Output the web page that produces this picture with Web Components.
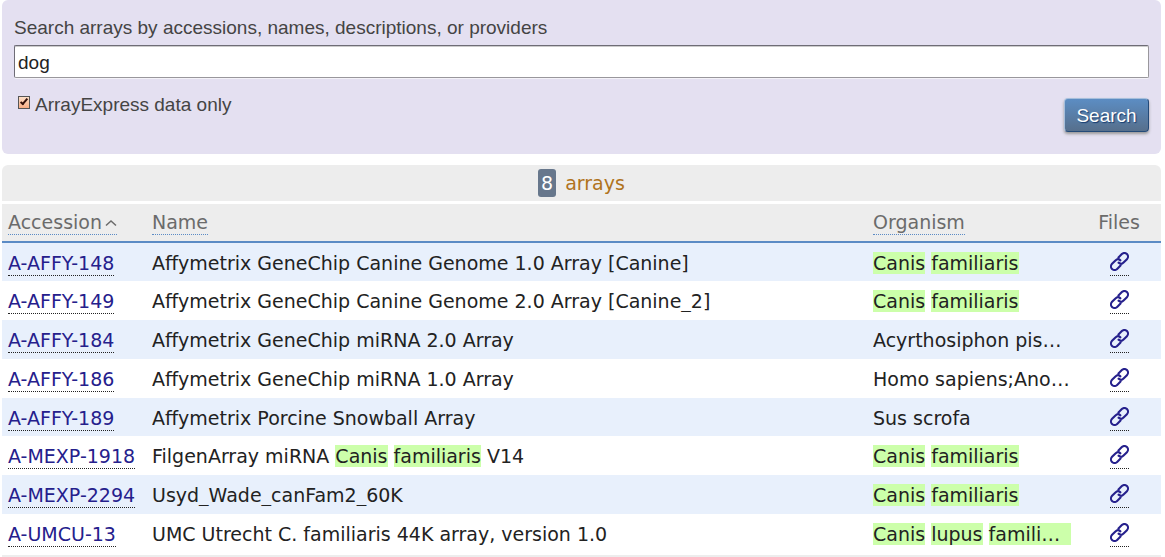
<!DOCTYPE html>
<html lang="en">
<head>
<meta charset="utf-8">
<title>Arrays</title>
<style>
  body { margin: 0 4px 0 2px; background: #fff; color: #222; font: 19px/22px "DejaVu Sans", sans-serif; }
  search-panel { margin-bottom: 11px; }
  summary-bar { margin-bottom: 3px; }
</style>
</head>
<body>
<search-panel value="dog">Search arrays by accessions, names, descriptions, or providers</search-panel>
<summary-bar count="8">arrays</summary-bar>
<array-table></array-table>

<template id="search-panel">
  <style>
    :host { display: block; box-sizing: border-box; min-height: 154px; padding: 17px 12px 20px; background: #e4e0f1; border-radius: 6px; color: #444; font-family: "Liberation Sans", Arial, sans-serif; }
    form { display: block; margin: 0; }
    .caption { display: block; margin-bottom: 6px; }
    .query { display: block; box-sizing: border-box; width: 100%; height: 33px; margin: 0; padding: 2px 3px 0; border: 1px solid; border-color: #6e6c76 #99979c #99979c #6e6c76; border-radius: 2px; background: #fff; box-shadow: inset 0 1px #ccc, 0 1px #f4f2f8; color: #222; font: inherit; outline: none; }
    .actions { display: flex; justify-content: space-between; align-items: flex-start; padding-top: 16px; }
    .option { display: flex; align-items: flex-start; gap: 5px; padding-left: 4px; }
    input[type=checkbox] { appearance: none; box-sizing: border-box; width: 12px; height: 13px; margin: 2px 0 0; border: 1px solid #555; background: linear-gradient(#fde0c8, #f8ad84); position: relative; }
    input[type=checkbox]:checked::after { content: ""; position: absolute; left: 3px; top: 0; width: 2px; height: 6px; border: solid #34120c; border-width: 0 2px 2px 0; transform: rotate(40deg); }
    button { box-sizing: border-box; width: 85px; height: 34px; margin: 4px 0 0; padding: 2px 0 0; border: 1px solid; border-color: #a6bfdc #244a78 #244a78 #a6bfdc; border-radius: 4px; background: linear-gradient(#5c8dc3, #566f8c); box-shadow: 0 2px 3px #999; color: #fff; font: inherit; text-shadow: 1px 1px 1px #143c70; }
  </style>
  <form>
    <label class="caption" for="query"><slot></slot></label>
    <input class="query" id="query" type="text">
    <div class="actions">
      <div class="option">
        <input id="local" type="checkbox" checked>
        <label for="local">ArrayExpress data only</label>
      </div>
      <button type="button">Search</button>
    </div>
  </form>
</template>

<template id="summary-bar">
  <style>
    :host { display: flex; justify-content: center; align-items: center; gap: 9px; height: 36px; background: #ededed; border-radius: 6px 6px 0 0; color: #b0731c; }
    b { padding: 3px; border-radius: 3px; background: #67778c; color: #fff; font-weight: normal; }
  </style>
  <b></b><span><slot></slot></span>
</template>

<template id="link-icon">
  <style>
    :host { display: inline-block; width: 19px; height: 19px; color: #25208c; }
    svg { display: block; width: 100%; height: 100%; }
  </style>
  <svg viewBox="0 0 19 19" fill="none" stroke="currentColor" stroke-width="2.1" stroke-linecap="round" stroke-linejoin="round" aria-hidden="true">
    <path d="M8.600 10.650A3.600 3.600 0 0 0 13.550 10.550L16.950 7.150A3.600 3.600 0 0 0 11.850 2.050L8.450 5.450"/>
    <path d="M10.400 8.350A3.600 3.600 0 0 0 5.450 8.450L2.050 11.850A3.600 3.600 0 0 0 7.150 16.950L10.550 13.550"/>
  </svg>
</template>

<template id="array-table">
  <style>
    :host { display: block; border-bottom: 2px solid #ededed; padding-bottom: 2px; }
    table { width: 100%; table-layout: fixed; border-collapse: separate; border-spacing: 0; }
    .accession { width: 144px; } .organism { width: 210px; } .files { width: 84px; }
    th, td { box-sizing: border-box; height: 39px; text-align: left; font-weight: normal; white-space: nowrap; vertical-align: top; }
    th { padding: 7px 6px 0; background: #ededed; border-bottom: 2px solid #5b8bc5; color: #6b6b6b; }
    td { padding: 9px 6px 0; }
    tbody tr:nth-child(4n+1) td { height: 38px; }
    tbody tr:nth-child(odd) { background: #e8f0fc; }
    a { display: inline-block; height: 24px; box-sizing: border-box; border-bottom: 1px dotted #222; color: #25208c; text-decoration: none; }
    th a { color: inherit; border-bottom-color: #5b8bc5; }
    th svg { width: 12px; height: 8px; margin-left: 3px; vertical-align: 2px; }
    .clip { overflow: hidden; text-overflow: ellipsis; }
    mark { background: #ccffaa; color: inherit; }
    th:last-child, td:last-child { text-align: center; }
    link-icon { vertical-align: top; }
  </style>
  <table>
    <colgroup><col class="accession"><col><col class="organism"><col class="files"></colgroup>
    <thead><tr>
      <th scope="col"><a href="#accession">Accession<svg viewBox="0 0 12 8" fill="none" stroke="#6b6b6b" stroke-width="1.500" aria-hidden="true"><path d="M1 6.500 6 2l5 4.500"/></svg></a></th>
      <th scope="col"><a href="#name">Name</a></th>
      <th scope="col"><a href="#organism">Organism</a></th>
      <th scope="col">Files</th>
    </tr></thead>
    <tbody></tbody>
  </table>
</template>

<script>
class TemplateElement extends HTMLElement {
  constructor() {
    super();
    const template = document.getElementById(this.localName);
    this.attachShadow({ mode: "open" }).append(template.content.cloneNode(true));
  }
}

class SearchPanel extends TemplateElement {
  connectedCallback() { this.shadowRoot.getElementById("query").value = this.getAttribute("value") || ""; }
}

class SummaryBar extends TemplateElement {
  connectedCallback() { this.shadowRoot.querySelector("b").textContent = this.getAttribute("count"); }
}

class LinkIcon extends TemplateElement {}

// Words between asterisks are search hits.
const hits = text => text.replace(/\*([^*]+)\*/g, "<mark>$1</mark>");

const arrays = [
  ["A-AFFY-148", "Affymetrix GeneChip Canine Genome 1.0 Array [Canine]", "*Canis* *familiaris*"],
  ["A-AFFY-149", "Affymetrix GeneChip Canine Genome 2.0 Array [Canine_2]", "*Canis* *familiaris*"],
  ["A-AFFY-184", "Affymetrix GeneChip miRNA 2.0 Array", "Acyrthosiphon pisum"],
  ["A-AFFY-186", "Affymetrix GeneChip miRNA 1.0 Array", "Homo sapiens;Anopheles gambiae"],
  ["A-AFFY-189", "Affymetrix Porcine Snowball Array", "Sus scrofa"],
  ["A-MEXP-1918", "FilgenArray miRNA *Canis* *familiaris* V14", "*Canis* *familiaris*"],
  ["A-MEXP-2294", "Usyd_Wade_canFam2_60K", "*Canis* *familiaris*"],
  ["A-UMCU-13", "UMC Utrecht C. familiaris 44K array, version 1.0", "*Canis* *lupus* *familiaris*"]
];

class ArrayTable extends TemplateElement {
  connectedCallback() {
    this.shadowRoot.querySelector("tbody").innerHTML = arrays.map(([id, name, organism]) => `
      <tr>
        <td><a href="#${id}">${id}</a></td>
        <td><div class="clip">${hits(name)}</div></td>
        <td><div class="clip">${hits(organism)}</div></td>
        <td><a href="#${id}-files" aria-label="Files of ${id}"><link-icon></link-icon></a></td>
      </tr>`).join("");
  }
}

customElements.define("search-panel", SearchPanel);
customElements.define("summary-bar", SummaryBar);
customElements.define("link-icon", LinkIcon);
customElements.define("array-table", ArrayTable);
</script>
</body>
</html>
